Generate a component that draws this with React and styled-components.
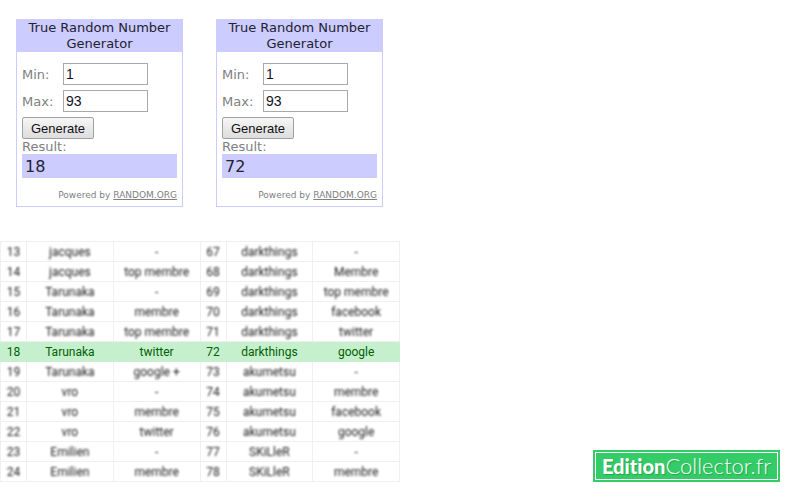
import React, { useState } from "react";
import styled, { createGlobalStyle, css } from "styled-components";

const GlobalStyle = createGlobalStyle`
  * {
    box-sizing: border-box;
  }
  body {
    margin: 0;
    background-color: #ffffff;
    font-family: "DejaVu Sans", sans-serif;
  }
`;
const StyledPage = styled.main`
  display: grid;
  grid-template-columns: 1fr 1fr;
  align-items: end;
  min-height: 100vh;
  padding: 19px 0;
`;
const StyledDraw = styled.section`
  display: flex;
  flex-direction: column;
  align-self: start;
  gap: 34px;
`;
const StyledGenerators = styled.div`
  display: grid;
  grid-template-columns: 1fr 1fr;
  gap: 33px;
  padding: 0 17px 0 16px;
`;
const StyledCard = styled.form`
  border: 1px solid #ccccff;
  color: #808080;
  font-size: 13px;
`;
const StyledCardTitle = styled.h2`
  margin: 0;
  background-color: #ccccff;
  color: #222233;
  font-size: 13px;
  font-weight: normal;
  line-height: 16px;
  text-align: center;
`;
const StyledCardBody = styled.div`
  display: flex;
  flex-direction: column;
  align-items: flex-start;
  padding: 11px 5px 5px;
`;
const StyledField = styled.label`
  display: flex;
  align-items: center;
  margin-bottom: 5px;
`;
const StyledFieldName = styled.span`
  width: 41px;
`;
const StyledInput = styled.input`
  width: 85px;
  height: 22px;
  padding: 0 2px;
  border: 1px solid #a9a9a9;
  background-color: #ffffff;
  color: #111122;
  font-family: "Liberation Sans", sans-serif;
  font-size: 14px;
`;
const StyledButton = styled.button`
  width: 72px;
  height: 22px;
  padding: 0;
  border: 1px solid #a0a0a0;
  border-radius: 2px;
  background: linear-gradient(#f6f6f6, #dddddd);
  color: #111111;
  font-family: "Liberation Sans", sans-serif;
  font-size: 13px;
`;
const StyledResultName = styled.span`
  line-height: 15px;
`;
const StyledResult = styled.output`
  width: 100%;
  padding: 1px 3px 0;
  background-color: #ccccff;
  color: #222233;
  font-size: 16px;
  line-height: 23px;
`;
const StyledPowered = styled.p`
  align-self: flex-end;
  margin: 11px 0 0;
  font-size: 9px;
  line-height: 12px;
  white-space: nowrap;
`;
const StyledLink = styled.a`
  color: inherit;
`;
const StyledTable = styled.table`
  width: 100%;
  border-collapse: collapse;
  table-layout: fixed;
  color: #222222;
  font-family: Roboto, sans-serif;
  font-size: 12px;
  line-height: 18px;
  text-align: center;
`;
const StyledNumberCol = styled.col`
  width: 26px;
`;
const StyledCell = styled.td`
  padding: 1px 0 0;
  border: 1px solid #f0f0f0;
  white-space: nowrap;
  ${(props) =>
    props.$winner &&
    css`
      border-color: #c6efce;
      background-color: #c6efce;
      color: #006100;
    `}
`;
const StyledCellText = styled.span`
  filter: ${(props) => (props.$winner ? "none" : "blur(1px)")};
`;
const StyledLogo = styled.a`
  justify-self: end;
  margin-right: 20px;
  border: 1px solid #33cc66;
  background-color: #33cc66;
  color: #ffffff;
  text-decoration: none;
`;
const StyledLogoText = styled.span`
  display: block;
  margin: 1px;
  padding: 0 6px;
  border: 1px solid #ffffff;
  font-family: Lato, sans-serif;
  font-size: 22px;
  font-variant-ligatures: none;
  font-weight: 300;
  line-height: 25px;
  text-shadow: 1px 1px 1px #28a050;
`;
const StyledLogoStrong = styled.strong`
  font-size: 20px;
  font-weight: 900;
`;

const entries = [
  [13, "jacques", "-", 67, "darkthings", "-"],
  [14, "jacques", "top membre", 68, "darkthings", "Membre"],
  [15, "Tarunaka", "-", 69, "darkthings", "top membre"],
  [16, "Tarunaka", "membre", 70, "darkthings", "facebook"],
  [17, "Tarunaka", "top membre", 71, "darkthings", "twitter"],
  [18, "Tarunaka", "twitter", 72, "darkthings", "google"],
  [19, "Tarunaka", "google +", 73, "akumetsu", "-"],
  [20, "vro", "-", 74, "akumetsu", "membre"],
  [21, "vro", "membre", 75, "akumetsu", "facebook"],
  [22, "vro", "twitter", 76, "akumetsu", "google"],
  [23, "Emilien", "-", 77, "SKiLleR", "-"],
  [24, "Emilien", "membre", 78, "SKiLleR", "membre"],
];

const Generator = ({ initial }) => {
  const [min, setMin] = useState("1");
  const [max, setMax] = useState("93");
  const [result, setResult] = useState(initial);

  const generate = (e) => {
    e.preventDefault();
    const low = Number(min);
    const high = Number(max);
    setResult(low + Math.floor(Math.random() * (high - low + 1)));
  };

  return (
    <StyledCard onSubmit={generate}>
      <StyledCardTitle>True Random Number Generator</StyledCardTitle>
      <StyledCardBody>
        <StyledField>
          <StyledFieldName>Min:</StyledFieldName>
          <StyledInput value={min} onChange={(e) => setMin(e.target.value)} />
        </StyledField>
        <StyledField>
          <StyledFieldName>Max:</StyledFieldName>
          <StyledInput value={max} onChange={(e) => setMax(e.target.value)} />
        </StyledField>
        <StyledButton type="submit">Generate</StyledButton>
        <StyledResultName>Result:</StyledResultName>
        <StyledResult>{result}</StyledResult>
        <StyledPowered>
          Powered by <StyledLink href="https://www.random.org">RANDOM.ORG</StyledLink>
        </StyledPowered>
      </StyledCardBody>
    </StyledCard>
  );
};

const App = () => {
  const winners = [18, 72];

  return (
    <StyledPage>
      <GlobalStyle />
      <StyledDraw>
        <StyledGenerators>
          {winners.map((w) => (
            <Generator key={w} initial={w} />
          ))}
        </StyledGenerators>

        {/* participants, only the winning row is readable */}
        <StyledTable>
          <colgroup>
            <StyledNumberCol />
            <col />
            <col />
            <StyledNumberCol />
            <col />
            <col />
          </colgroup>
          <tbody>
            {entries.map((row) => {
              const winner = winners.includes(row[0]);
              return (
                <tr key={row[0]}>
                  {row.map((text, index) => (
                    <StyledCell key={index} $winner={winner}>
                      <StyledCellText $winner={winner}>{text}</StyledCellText>
                    </StyledCell>
                  ))}
                </tr>
              );
            })}
          </tbody>
        </StyledTable>
      </StyledDraw>

      <StyledLogo href="/">
        <StyledLogoText>
          <StyledLogoStrong>Edition</StyledLogoStrong>Collector.fr
        </StyledLogoText>
      </StyledLogo>
    </StyledPage>
  );
};

export default App;
